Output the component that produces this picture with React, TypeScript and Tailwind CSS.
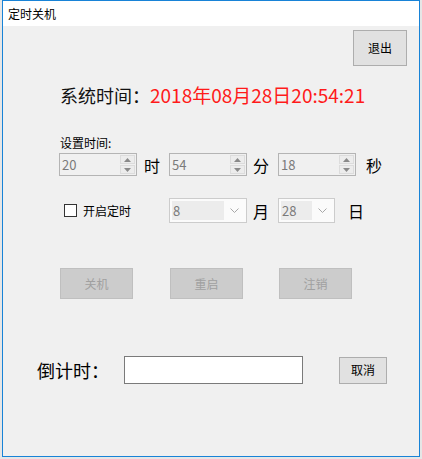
const FONT = '"Noto Sans CJK SC", "Noto Sans", sans-serif';

// disabled numeric up-down
function Spin({ value, className = "" }: { value: string; className?: string }) {
  return (
    <div
      className={`flex h-[23px] w-[78px] shrink-0 items-stretch border border-[#b4b4b4] bg-[#f0f0f0] ${className}`}
    >
      <div className="flex flex-1 items-center pl-[2px] text-[13px] leading-none text-[#7a7a7a]">
        {value}
      </div>
      <div className="my-[1px] mr-[1px] flex w-[15px] flex-col gap-[1px]">
        <div className="flex flex-1 items-center justify-center border border-[#dcdcdc] bg-[#ececec]">
          <svg width="7" height="4" viewBox="0 0 7 4">
            <path d="M0 4 L3.5 0 L7 4 Z" fill="#8a8a8a" />
          </svg>
        </div>
        <div className="flex flex-1 items-center justify-center border border-[#dcdcdc] bg-[#ececec]">
          <svg width="7" height="4" viewBox="0 0 7 4">
            <path d="M0 0 L3.5 4 L7 0 Z" fill="#8a8a8a" />
          </svg>
        </div>
      </div>
    </div>
  );
}

// disabled combo box
function Combo({ value, className = "" }: { value: string; className?: string }) {
  return (
    <div
      className={`flex h-[25px] shrink-0 items-center border border-[#cccccc] bg-[#fbfbfb] p-[2px] ${className}`}
    >
      <div className="flex h-full flex-1 items-center bg-[#ececec] pl-[1px] text-[13px] leading-none text-[#7a7a7a]">
        {value}
      </div>
      <div className="flex w-[20px] items-center justify-center">
        <svg width="9" height="5" viewBox="0 0 9 5">
          <path d="M0.5 0.5 L4.5 4.5 L8.5 0.5" fill="none" stroke="#a8a8a8" strokeWidth="1" />
        </svg>
      </div>
    </div>
  );
}

function Unit({ children, className = "" }: { children: string; className?: string }) {
  return <span className={`text-[16px] leading-none text-black ${className}`}>{children}</span>;
}

function DisabledButton({ label, className = "" }: { label: string; className?: string }) {
  return (
    <div
      className={`flex h-[31px] w-[73px] shrink-0 items-center justify-center border border-[#bfbfbf] bg-[#cccccc] text-[12px] text-[#a0a0a0] ${className}`}
    >
      {label}
    </div>
  );
}

export default function App() {
  return (
    <div
      className="h-[459px] w-[422px] overflow-hidden bg-[#e6e6e6]"
      style={{ fontFamily: FONT }}
    >
      <div className="ml-[2px] flex h-[457px] w-[418px] flex-col border border-[#1883d7] bg-[#f0f0f0]">
        {/* title bar */}
        <div className="flex h-[25px] items-center bg-white pl-[5px] text-[12px] text-black">
          定时关机
        </div>

        {/* exit */}
        <div className="mt-[4px] flex justify-end pr-[12px]">
          <div className="flex h-[36px] w-[54px] items-center justify-center border border-[#adadad] bg-[#e1e1e1] text-[12px] text-black">
            退出
          </div>
        </div>

        {/* system time */}
        <div className="mt-[17px] flex items-center pl-[57px] text-[18px] leading-[24px]">
          <span className="text-[#111]">系统时间：</span>
          <span className="text-[19px] text-[#ff1a1a]">2018年08月28日20:54:21</span>
        </div>

        {/* set time */}
        <div className="mt-[28px] pl-[57px] text-[12px] leading-[16px] text-black">设置时间:</div>
        <div className="mt-[2px] flex items-center pl-[56px]">
          <Spin value="20" />
          <Unit className="ml-[7px]">时</Unit>
          <Spin value="54" className="ml-[9px]" />
          <Unit className="ml-[6px]">分</Unit>
          <Spin value="18" className="ml-[9px]" />
          <Unit className="ml-[10px]">秒</Unit>
        </div>

        {/* timer enable + date */}
        <div className="mt-[22px] flex items-center pl-[61px]">
          <div className="h-[13px] w-[13px] shrink-0 border border-[#333] bg-white" />
          <span className="ml-[6px] text-[12px] leading-none text-black">开启定时</span>
          <Combo value="8" className="ml-[38px] w-[78px]" />
          <Unit className="ml-[6px]">月</Unit>
          <Combo value="28" className="ml-[9px] w-[57px]" />
          <Unit className="ml-[13px]">日</Unit>
        </div>

        {/* actions */}
        <div className="mt-[45px] flex pl-[57px]">
          <DisabledButton label="关机" />
          <DisabledButton label="重启" className="ml-[37px]" />
          <DisabledButton label="注销" className="ml-[36px]" />
        </div>

        {/* countdown */}
        <div className="mt-[57px] flex items-center pl-[34px]">
          <span className="w-[87px] shrink-0 text-[18px] leading-none text-black">倒计时：</span>
          <div className="h-[28px] w-[179px] shrink-0 border border-[#7a7a7a] bg-white" />
          <div className="ml-[36px] flex h-[27px] w-[48px] items-center justify-center border border-[#adadad] bg-[#e1e1e1] text-[12px] text-black">
            取消
          </div>
        </div>
      </div>
    </div>
  );
}
